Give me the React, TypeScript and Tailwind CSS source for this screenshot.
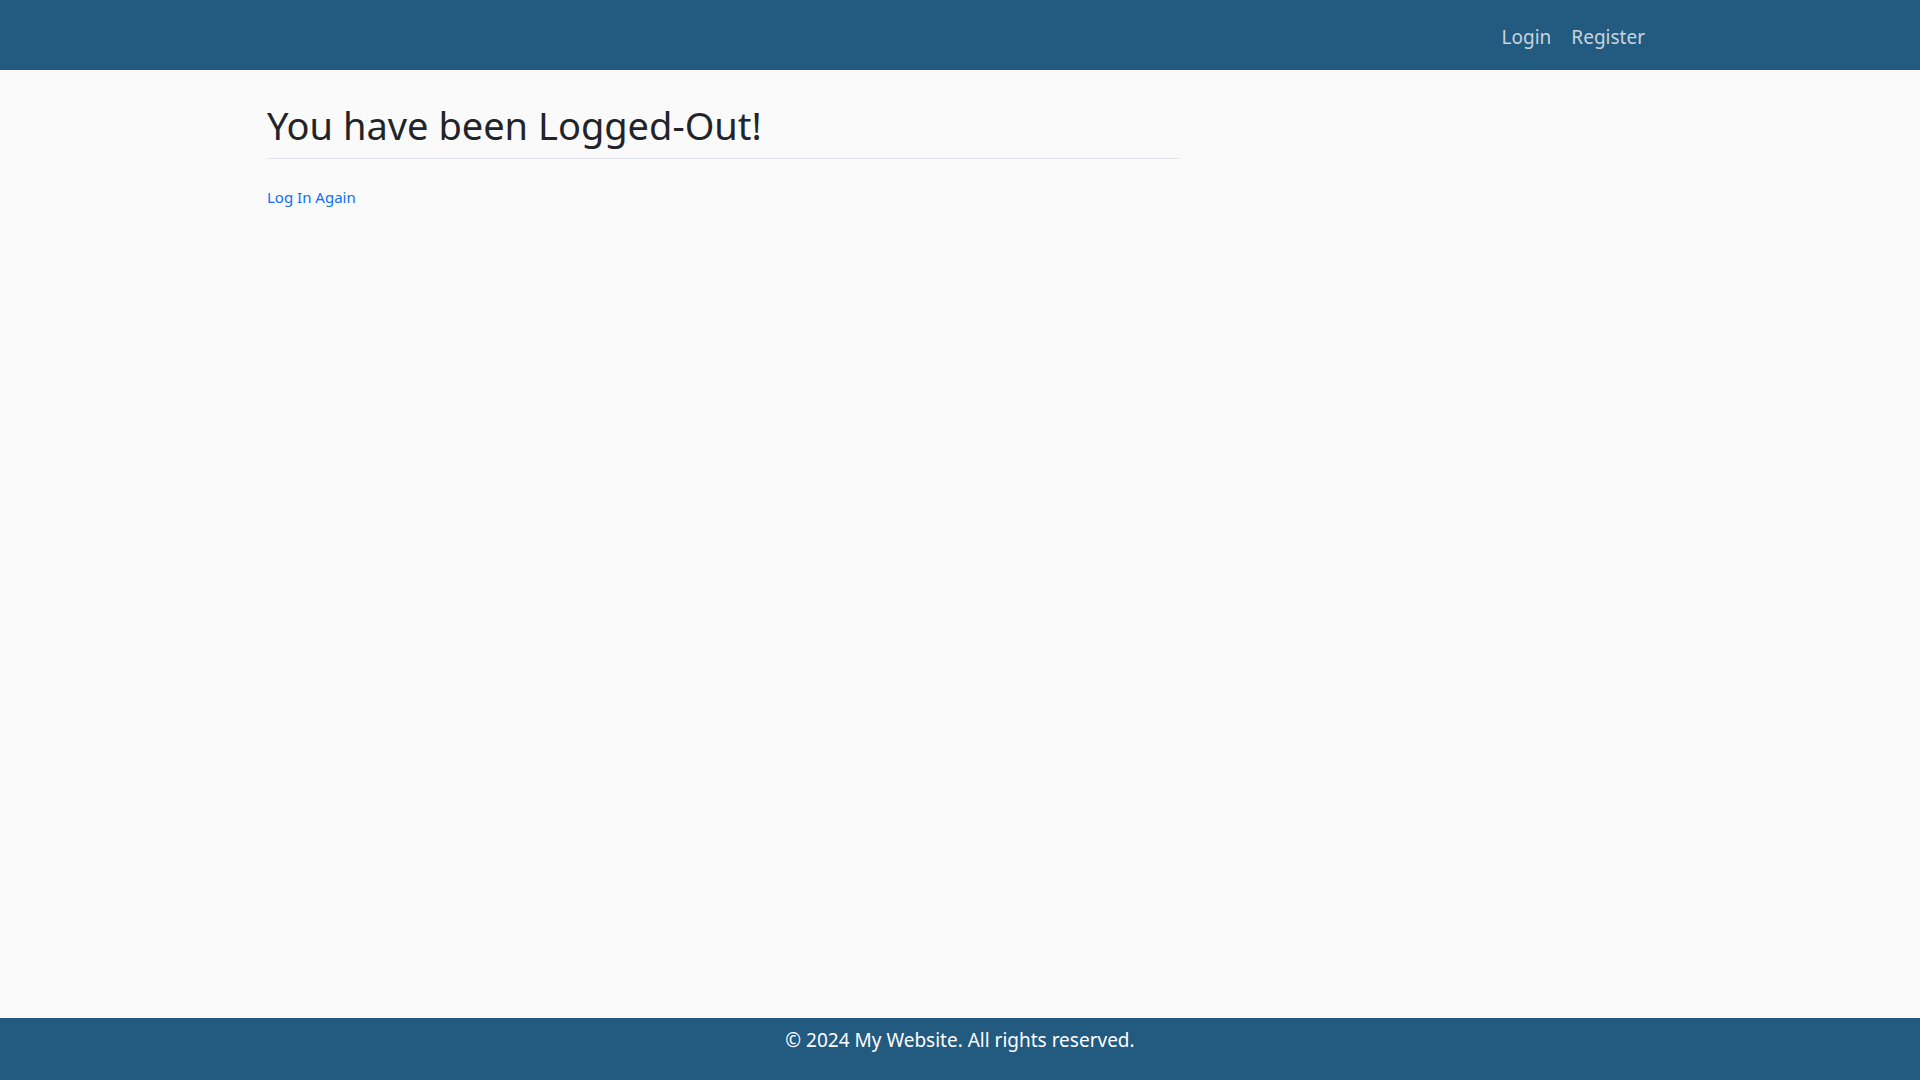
export default function App() {
  return (
    <div className="min-h-screen flex flex-col bg-[#fafafa] font-['Noto_Sans',sans-serif] text-[#212529]">
      <nav className="h-[70px] bg-[#225a80] flex items-center pt-[5px]">
        <div className="w-[1400px] mx-auto pl-3 pr-[5px] flex justify-end">
          <ul className="flex">
            <li>
              <a href="#" className="px-[10px] text-[19px] text-white/75">Login</a>
            </li>
            <li>
              <a href="#" className="px-[10px] text-[19px] text-white/75">Register</a>
            </li>
          </ul>
        </div>
      </nav>

      <main className="flex-1">
        <div className="w-[1400px] mx-auto px-[7px]">
          <div className="w-[912px] pt-[33px]">
            <h1 className="text-[38px] leading-[1.2] pb-[9px] border-b border-[#dee2e6]">
              You have been Logged-Out!
            </h1>
            <a href="#" className="inline-block mt-[27px] text-[15px] text-[#0d6efd]">
              Log In Again
            </a>
          </div>
        </div>
      </main>

      <footer className="h-[62px] bg-[#225a80] text-white text-center pt-[8px] text-[19px]">
        © 2024 My Website. All rights reserved.
      </footer>
    </div>
  );
}
